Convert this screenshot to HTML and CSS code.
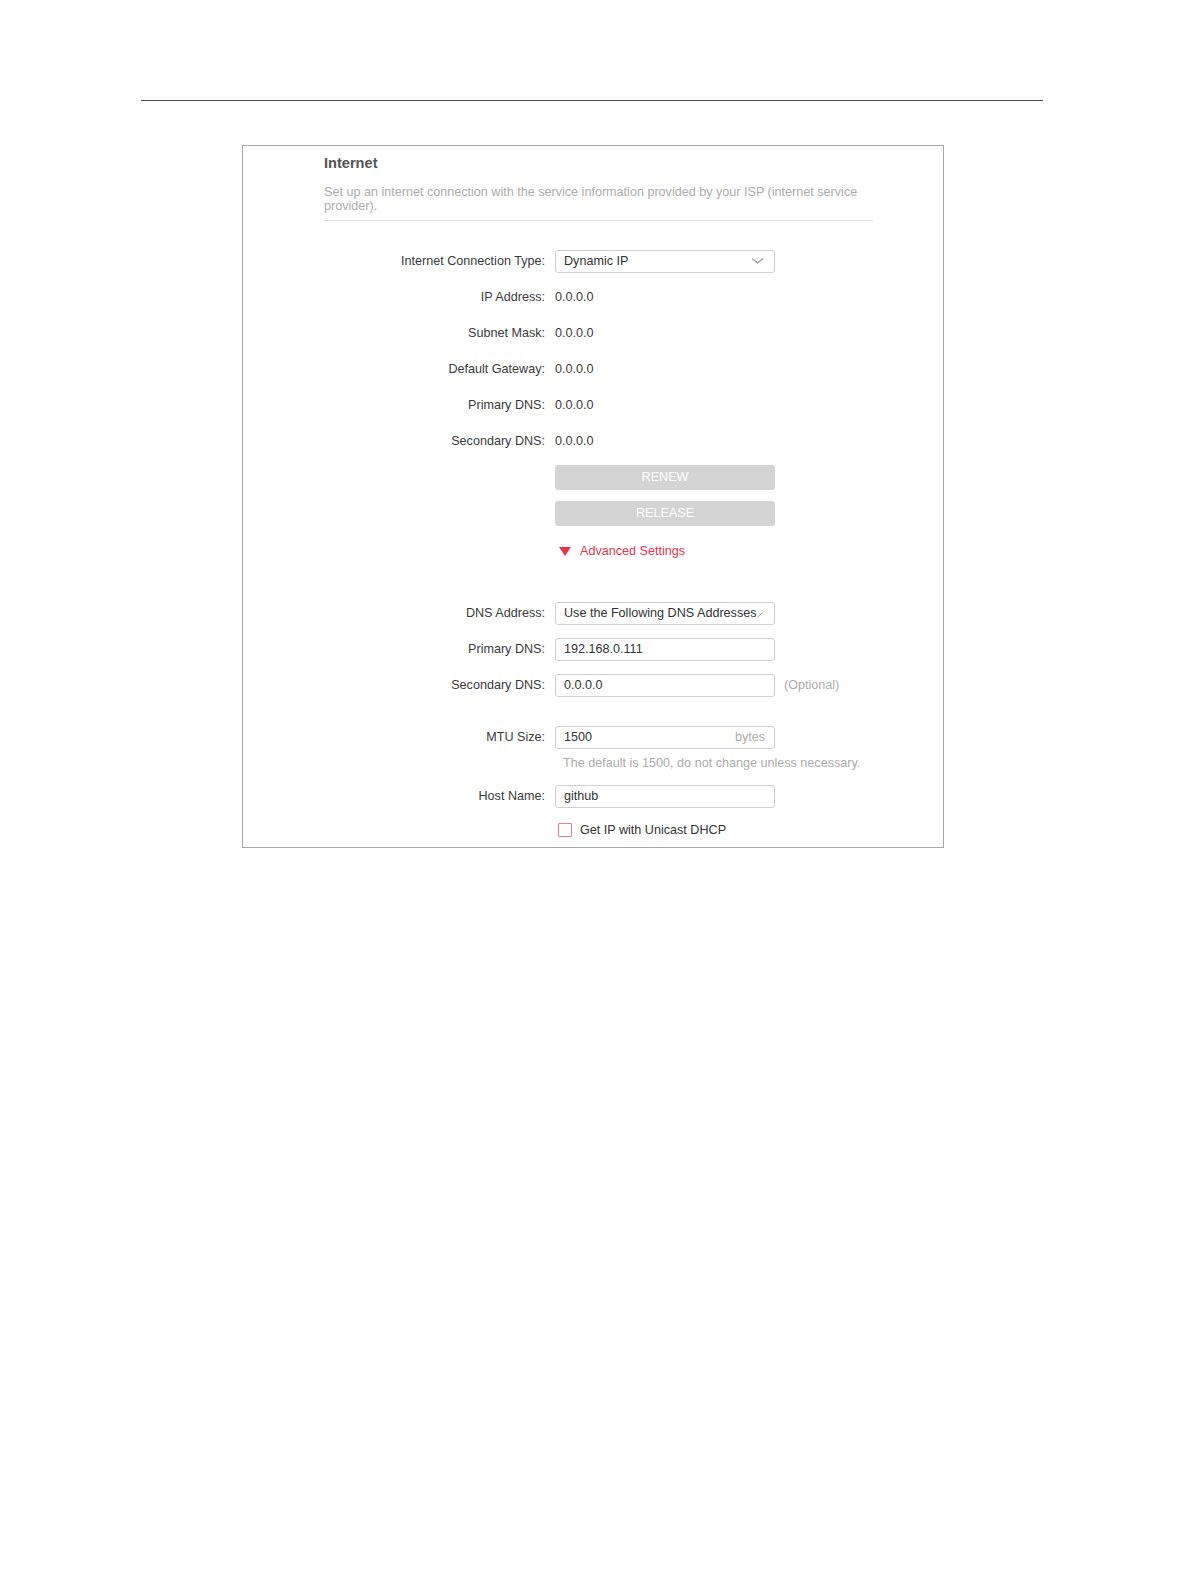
FILE: index.html
```html
<!DOCTYPE html>
<html lang="en">
<head>
    <meta charset="UTF-8">
    <meta name="viewport" content="width=device-width, initial-scale=1.0">
    <title>Internet</title>
    <link rel="stylesheet" href="styles.css">
</head>
<body>
    <div class="page">
        <div class="top-rule"></div>

        <div class="panel">
            <div class="panel-head">
                <h2 class="title">Internet</h2>
                <p class="desc">Set up an internet connection with the service information provided by your ISP (internet service provider).</p>
            </div>

            <div class="form">
                <div class="row">
                    <span class="label">Internet Connection Type:</span>
                    <div class="select">
                        <span>Dynamic IP</span>
                        <svg class="chevron" width="13" height="8" viewBox="0 0 13 8"><path d="M1 1.5 L6.5 6 L12 1.5" fill="none" stroke="#9a9a9a" stroke-width="1.3"/></svg>
                    </div>
                </div>
                <div class="row">
                    <span class="label">IP Address:</span>
                    <span class="value">0.0.0.0</span>
                </div>
                <div class="row">
                    <span class="label">Subnet Mask:</span>
                    <span class="value">0.0.0.0</span>
                </div>
                <div class="row">
                    <span class="label">Default Gateway:</span>
                    <span class="value">0.0.0.0</span>
                </div>
                <div class="row">
                    <span class="label">Primary DNS:</span>
                    <span class="value">0.0.0.0</span>
                </div>
                <div class="row">
                    <span class="label">Secondary DNS:</span>
                    <span class="value">0.0.0.0</span>
                </div>
                <div class="row">
                    <span class="label"></span>
                    <button class="btn" type="button">RENEW</button>
                </div>
                <div class="row">
                    <span class="label"></span>
                    <button class="btn" type="button">RELEASE</button>
                </div>
                <div class="row row-adv">
                    <span class="label"></span>
                    <a class="advanced">
                        <svg width="12" height="9" viewBox="0 0 12 9"><path d="M0 0 H12 L6 9 Z" fill="#e8344f"/></svg>
                        Advanced Settings
                    </a>
                </div>

                <div class="row row-dns">
                    <span class="label">DNS Address:</span>
                    <div class="select select-dns">
                        <span>Use the Following DNS Addresses</span>
                        <svg class="tick" width="6" height="6" viewBox="0 0 6 6"><path d="M0.5 5 L5.5 0.8" fill="none" stroke="#9a9a9a" stroke-width="1"/></svg>
                    </div>
                </div>
                <div class="row">
                    <span class="label">Primary DNS:</span>
                    <div class="input">192.168.0.111</div>
                </div>
                <div class="row">
                    <span class="label">Secondary DNS:</span>
                    <div class="input">0.0.0.0</div>
                    <span class="note">(Optional)</span>
                </div>

                <div class="row row-mtu">
                    <span class="label">MTU Size:</span>
                    <div class="input input-unit">
                        <span>1500</span>
                        <span class="unit">bytes</span>
                    </div>
                </div>
                <div class="row row-hint">
                    <span class="label"></span>
                    <span class="hint">The default is 1500, do not change unless necessary.</span>
                </div>
                <div class="row row-host">
                    <span class="label">Host Name:</span>
                    <div class="input">github</div>
                </div>
                <div class="row row-check">
                    <span class="label"></span>
                    <label class="check">
                        <span class="box"></span>
                        Get IP with Unicast DHCP
                    </label>
                </div>
            </div>
        </div>
    </div>
</body>
</html>
```

FILE: styles.css
```css
/* 기본 */
body {
    margin: 0;
    background: #ffffff;
    font-family: "Liberation Sans", Arial, sans-serif;
    color: #333333;
}

.page {
    padding-top: 100px;
}

.top-rule {
    margin-left: 141px;
    width: 902px;
    height: 1px;
    background: #4a4a4a;
}

/* 설정 패널 */
.panel {
    margin: 44px 0 0 242px;
    width: 619px;
    height: 701px;
    border: 1px solid #a8a8a8;
    padding-left: 81px;
    box-sizing: content-box;
}

.panel-head {
    width: 549px;
    padding-top: 8px;
    padding-bottom: 7px;
    border-bottom: 1px solid #d9d9d9;
}

.title {
    margin: 0;
    font-size: 14.6px;
    line-height: 18px;
    font-weight: bold;
    color: #555555;
}

.desc {
    margin: 13px 0 0;
    font-size: 12.6px;
    line-height: 14px;
    color: #acacac;
}

.form {
    margin-top: 22px;
    display: flex;
    flex-direction: column;
}

.row {
    display: flex;
    align-items: center;
    height: 36px;
    font-size: 12.6px;
}

.label {
    width: 221px;
    flex-shrink: 0;
    margin-right: 10px;
    text-align: right;
    color: #3a3a3a;
}

.value {
    color: #3a3a3a;
}

.select, .input {
    width: 220px;
    height: 23px;
    box-sizing: border-box;
    border: 1px solid #cfcfcf;
    border-radius: 3px;
    padding: 0 9px 0 8px;
    display: flex;
    align-items: center;
    justify-content: space-between;
    color: #333333;
    background: #ffffff;
}

.select .chevron {
    margin-right: 1px;
}

.select-dns {
    padding-right: 10px;
    white-space: nowrap;
    overflow: hidden;
    justify-content: flex-start;
}

.select-dns .tick {
    flex-shrink: 0;
    margin-top: 3px;
}

.btn {
    width: 220px;
    height: 25px;
    border: none;
    border-radius: 3px;
    background: #d4d4d4;
    color: #ffffff;
    font-family: inherit;
    font-size: 12.6px;
    padding: 0;
}

.row-adv {
    height: 40px;
}

.advanced {
    display: flex;
    align-items: center;
    gap: 9px;
    margin-left: 4px;
    color: #e8344f;
}

.row-dns {
    margin-top: 24px;
}

.row-mtu {
    margin-top: 16px;
}

.row-hint {
    height: 16px;
}

.row-host {
    margin-top: 7px;
}

.row-check {
    height: 32px;
}

.note {
    margin-left: 9px;
    color: #acacac;
}

.unit {
    color: #acacac;
}

.hint {
    margin-left: 8px;
    color: #acacac;
}

.check {
    display: flex;
    align-items: center;
    gap: 8px;
    margin-left: 3px;
    color: #333333;
}

.check .box {
    width: 12px;
    height: 12px;
    border: 1px solid #e97b91;
    border-radius: 1px;
}
```
